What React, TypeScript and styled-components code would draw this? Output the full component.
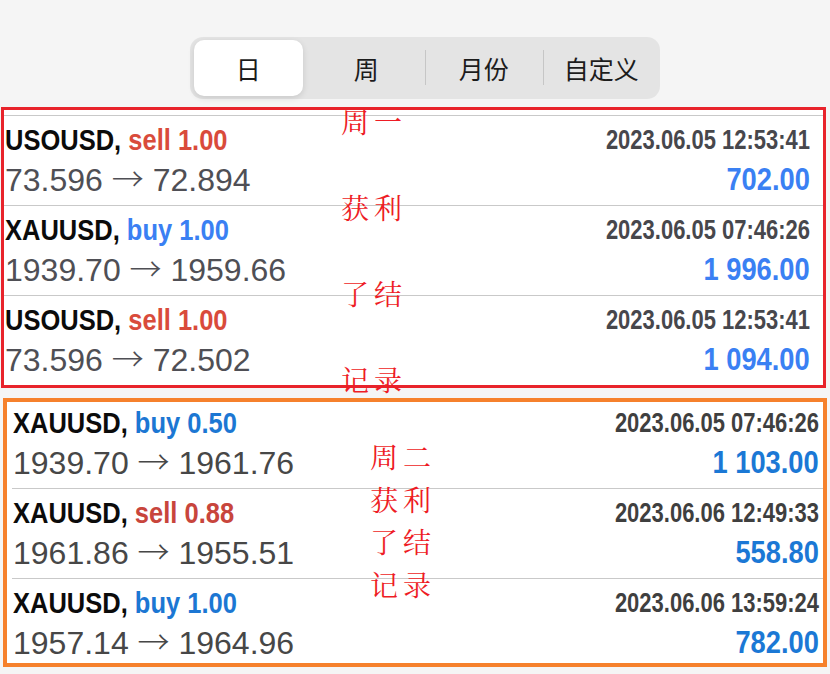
import styled, { createGlobalStyle, css } from "styled-components"

const GlobalStyle = createGlobalStyle`
  html, body {
    margin: 0;
    background: #f5f5f5;
  }
  body {
    font-family: "Liberation Sans", Arial, sans-serif;
  }
`

type Tone = "red" | "orange"

const tones = {
  red: {
    border: "#e8232b",
    borderWidth: 3,
    left: 1,
    width: 825,
    padRight: 13,
    inset: 0,
    buy: "#3a80f3",
    sell: "#d94b3b",
    amount: "#3a80f3",
    time: "#47474c",
    price: "#4f4f55",
  },
  orange: {
    border: "#f6812c",
    borderWidth: 4,
    left: 3,
    width: 824,
    padRight: 4,
    inset: 5,
    buy: "#1c77d3",
    sell: "#c8453c",
    amount: "#1b78d5",
    time: "#3f3f3f",
    price: "#474747",
  },
}

// helvetica condensed look: squeeze the bold text horizontally
const condensed = (ratio: number, origin: "left" | "right") => css`
  display: inline-block;
  transform: scaleX(${ratio});
  transform-origin: ${origin} center;
`

const Page = styled.main`
  position: relative;
  width: 830px;
  height: 674px;
  overflow: hidden;
`

const TabsBar = styled.div`
  display: flex;
  padding: 37px 0 0 190px;
  margin-bottom: 8px;
`

const Segmented = styled.div`
  display: grid;
  grid-template-columns: repeat(4, 1fr);
  width: 470px;
  height: 62px;
  border-radius: 13px;
  background: #e4e4e4;
`

const Segment = styled.div<{ $active?: boolean; $divider?: boolean }>`
  position: relative;
  display: flex;
  align-items: center;
  justify-content: center;
  font-family: "Noto Sans CJK SC", sans-serif;
  font-size: 25px;
  color: #1c1c1c;
  margin: ${(p) => (p.$active ? "3px 5px 3px 4px" : "0")};
  border-radius: 10px;
  background: ${(p) => (p.$active ? "#ffffff" : "transparent")};
  box-shadow: ${(p) => (p.$active ? "0 2px 6px rgba(0,0,0,0.12)" : "none")};

  &::before {
    content: "";
    display: ${(p) => (p.$divider ? "block" : "none")};
    position: absolute;
    left: 0;
    top: 13px;
    height: 35px;
    width: 1px;
    background: #c6c6c6;
  }
`

const Panel = styled.section<{ $tone: Tone }>`
  box-sizing: border-box;
  margin-left: ${(p) => tones[p.$tone].left}px;
  width: ${(p) => tones[p.$tone].width}px;
  border: ${(p) => tones[p.$tone].borderWidth}px solid ${(p) => tones[p.$tone].border};
  background: #ffffff;
  overflow: hidden;
  padding-top: ${(p) => (p.$tone === "red" ? 5 : 0)}px;
  height: ${(p) => (p.$tone === "red" ? 281 : 269)}px;
  & + & {
    margin-top: 10px;
  }
`

const List = styled.div<{ $tone: Tone }>`
  margin-top: ${(p) => (p.$tone === "orange" ? -4 : 0)}px;
`

const Row = styled.div<{ $tone: Tone }>`
  display: grid;
  grid-template-columns: 1fr auto;
  grid-template-rows: 40px 40px;
  height: 90px;
  box-sizing: border-box;
  border-top: 1px solid #c9c9c9;
  padding: 4px ${(p) => tones[p.$tone].padRight}px 5px 1px;
  margin-left: ${(p) => tones[p.$tone].inset}px;
`

const Title = styled.div`
  font-weight: 700;
  font-size: 30px;
  line-height: 40px;
  color: #0b0b0b;
  white-space: nowrap;
`

const TitleText = styled.span`
  ${condensed(0.85, "left")}
`

const Side = styled.span<{ $tone: Tone; $side: "buy" | "sell" }>`
  color: ${(p) => tones[p.$tone][p.$side]};
`

const Time = styled.div<{ $tone: Tone }>`
  font-weight: 700;
  font-size: 28px;
  line-height: 40px;
  color: ${(p) => tones[p.$tone].time};
  text-align: right;
  white-space: nowrap;
  span {
    ${condensed(0.785, "right")}
  }
`

const Prices = styled.div<{ $tone: Tone }>`
  font-size: 32px;
  line-height: 40px;
  color: ${(p) => tones[p.$tone].price};
  white-space: nowrap;
`

const Arrow = styled.span`
  font-family: "Noto Sans CJK SC", sans-serif;
  font-weight: 300;
  line-height: 0;
`

const Amount = styled.div<{ $tone: Tone }>`
  font-weight: 700;
  font-size: 31px;
  line-height: 40px;
  color: ${(p) => tones[p.$tone].amount};
  text-align: right;
  white-space: nowrap;
  span {
    ${condensed(0.88, "right")}
  }
`

const Note = styled.div<{ $top: number; $left: number; $step: number }>`
  position: absolute;
  top: ${(p) => p.$top}px;
  left: ${(p) => p.$left}px;
  font-family: "Noto Serif CJK SC", "Noto Sans CJK SC", serif;
  font-size: 28px;
  line-height: ${(p) => p.$step}px;
  letter-spacing: 5px;
  color: #ee1c25;
  pointer-events: none;
`

type Deal = {
  symbol: string
  side: "buy" | "sell"
  volume: string
  open: string
  close: string
  time: string
  profit: string
}

const week1: Deal[] = [
  { symbol: "USOUSD", side: "sell", volume: "1.00", open: "73.596", close: "72.894", time: "2023.06.05 12:53:41", profit: "702.00" },
  { symbol: "XAUUSD", side: "buy", volume: "1.00", open: "1939.70", close: "1959.66", time: "2023.06.05 07:46:26", profit: "1 996.00" },
  { symbol: "USOUSD", side: "sell", volume: "1.00", open: "73.596", close: "72.502", time: "2023.06.05 12:53:41", profit: "1 094.00" },
]

const week2: Deal[] = [
  { symbol: "XAUUSD", side: "buy", volume: "0.50", open: "1939.70", close: "1961.76", time: "2023.06.05 07:46:26", profit: "1 103.00" },
  { symbol: "XAUUSD", side: "sell", volume: "0.88", open: "1961.86", close: "1955.51", time: "2023.06.06 12:49:33", profit: "558.80" },
  { symbol: "XAUUSD", side: "buy", volume: "1.00", open: "1957.14", close: "1964.96", time: "2023.06.06 13:59:24", profit: "782.00" },
]

const DealList = ({ tone, deals }: { tone: Tone; deals: Deal[] }) => (
  <Panel $tone={tone}>
    <List $tone={tone}>
      {deals.map((d, i) => (
        <Row $tone={tone} key={i}>
          <Title>
            <TitleText>
              {d.symbol},{" "}
              <Side $tone={tone} $side={d.side}>
                {d.side} {d.volume}
              </Side>
            </TitleText>
          </Title>
          <Time $tone={tone}>
            <span>{d.time}</span>
          </Time>
          <Prices $tone={tone}>
            {d.open} <Arrow>→</Arrow> {d.close}
          </Prices>
          <Amount $tone={tone}>
            <span>{d.profit}</span>
          </Amount>
        </Row>
      ))}
    </List>
  </Panel>
)

const tabs = ["日", "周", "月份", "自定义"]

export default function App() {
  return (
    <Page>
      <GlobalStyle />
      <TabsBar>
        <Segmented>
          {tabs.map((t, i) => (
            <Segment key={t} $active={i === 0} $divider={i >= 2}>
              {t}
            </Segment>
          ))}
        </Segmented>
      </TabsBar>
      <DealList tone="red" deals={week1} />
      <DealList tone="orange" deals={week2} />
      <Note $top={78} $left={341} $step={86}>
        周一<br />获利<br />了结<br />记录
      </Note>
      <Note $top={435} $left={370} $step={42.5}>
        周二<br />获利<br />了结<br />记录
      </Note>
    </Page>
  )
}
